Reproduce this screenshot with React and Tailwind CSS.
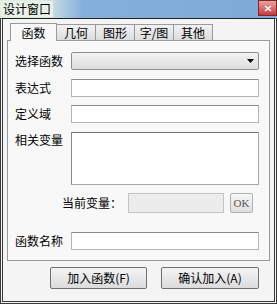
import React from 'react';

const font = { fontFamily: '"Noto Sans CJK SC", "Noto Sans", sans-serif' };

const tabs = ['函数', '几何', '图形', '字/图', '其他'];

const Field = ({ label, className = '', children }) => (
  <div className={`flex items-center ${className}`}>
    <span className="w-[56px] shrink-0 text-[12px] leading-none text-black">{label}</span>
    {children}
  </div>
);

const Box = ({ className = '' }) => (
  <div className={`border border-[#b5b5b5] border-t-[#8c8c8c] bg-white ${className}`} />
);

export default function App() {
  return (
    <div className="w-[277px] h-[304px] flex flex-col bg-[#f4f4f4] overflow-hidden" style={font}>
      {/* title bar */}
      <div className="h-[18px] shrink-0 flex items-center bg-gradient-to-r from-[#dfece2] from-15% via-[#84afdc] via-30% to-[#7fa9d8] relative">
        <span className="ml-[1px] text-[12px] leading-none text-black bg-[#e8f2e8] px-[2px] py-[2px]">设计窗口</span>
        <div className="ml-auto w-[19px] h-[16px] self-start bg-gradient-to-b from-[#e9a0a0] to-[#c8343c] border border-[#7a2a2a] flex items-center justify-center">
          <svg width="8" height="7" viewBox="0 0 8 7">
            <path d="M1 1 L7 6 M7 1 L1 6" stroke="#fff" strokeWidth="1.6" />
          </svg>
        </div>
      </div>

      {/* window body */}
      <div className="flex-1 flex flex-col border-l-[3px] border-r-[3px] border-b-[3px] border-double border-[#3a3a3a] border-t border-t-[#222] px-[3px]">
        {/* tabs */}
        <div className="flex items-end h-[20px] pl-[4px] mt-[1px]">
          {tabs.map((t, i) => (
            <div
              key={t}
              className={
                i === 0
                  ? 'h-[18px] w-[47px] border border-b-0 border-[#9a9a9a] bg-[#f8f8f8] text-[12px] leading-none flex items-center justify-center relative top-[1px] z-10'
                  : 'h-[16px] w-[39px] border border-b-0 border-l-0 border-[#9a9a9a] bg-gradient-to-b from-[#f2f2f2] to-[#dcdcdc] text-[12px] leading-none flex items-center justify-center'
              }
            >
              {t}
            </div>
          ))}
        </div>

        {/* tab panel */}
        <div className="h-[221px] ml-[1px] mr-[1px] border border-[#9a9a9a] bg-[#f8f8f8] pl-[7px] pr-[10px] pt-[11px] flex flex-col">
          <Field label="选择函数">
            <div className="flex-1 h-[18px] border border-[#8f8f8f] rounded-[2px] bg-gradient-to-b from-[#f2f2f2] to-[#dedede] flex items-center justify-end pr-[4px]">
              <svg width="7" height="4" viewBox="0 0 7 4">
                <path d="M0 0 L7 0 L3.5 4 Z" fill="#000" />
              </svg>
            </div>
          </Field>

          <Field label="表达式" className="mt-[9px]">
            <Box className="flex-1 h-[18px]" />
          </Field>

          <Field label="定义域" className="mt-[8px]">
            <Box className="flex-1 h-[18px]" />
          </Field>

          <div className="flex mt-[9px]">
            <span className="w-[56px] shrink-0 text-[12px] leading-none pt-[2px]">相关变量</span>
            <div className="flex-1 h-[53px] border border-[#a8a8a8] border-t-[#6f6f6f] border-l-[#8a8a8a] bg-white" />
          </div>

          <div className="flex items-center mt-[8px]">
            <span className="w-[113px] shrink-0 text-right pr-[6px] text-[12px] leading-none">当前变量：</span>
            <div className="w-[96px] h-[20px] border border-[#c4c4c4] bg-[#ececec]" />
            <div className="ml-[6px] w-[23px] h-[20px] border border-[#b0b0b0] rounded-[2px] bg-gradient-to-b from-[#f6f6f6] to-[#e0e0e0] text-[11px] leading-none text-[#555] flex items-center justify-center" style={{ fontFamily: '"Liberation Serif", serif' }}>
              OK
            </div>
          </div>

          <Field label="函数名称" className="mt-[19px]">
            <Box className="flex-1 h-[18px]" />
          </Field>
        </div>

        {/* buttons */}
        <div className="flex justify-end gap-[14px] pr-[12px] mt-[6px]">
          <button className="w-[97px] h-[22px] border border-[#707070] rounded-[2px] bg-gradient-to-b from-[#f4f4f4] to-[#dcdcdc] text-[12px] leading-none text-black">
            加入函数(F)
          </button>
          <button className="w-[98px] h-[22px] border border-[#707070] rounded-[2px] bg-gradient-to-b from-[#f4f4f4] to-[#dcdcdc] text-[12px] leading-none text-black">
            确认加入(A)
          </button>
        </div>
      </div>
    </div>
  );
}
